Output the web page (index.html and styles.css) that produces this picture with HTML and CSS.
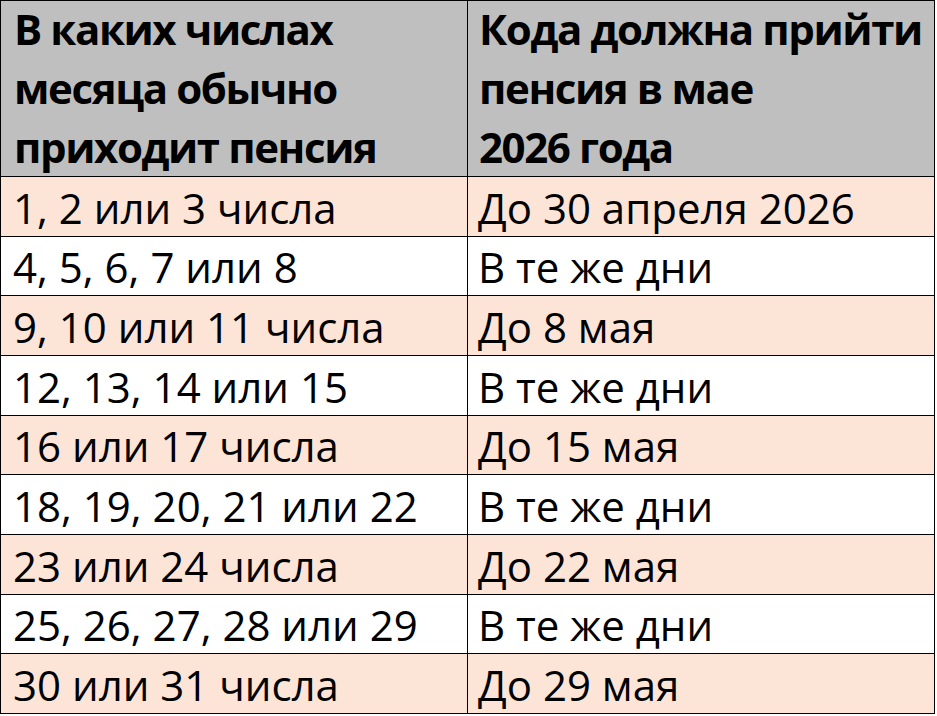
FILE: index.html
```html
<!DOCTYPE html>
<html lang="ru">
<head>
<meta charset="utf-8">
<title>Пенсия в мае 2026</title>
<link rel="stylesheet" href="styles.css">
</head>
<body>
<div class="table">
  <div class="cell head">В каких числах<br>месяца обычно<br>приходит пенсия</div>
  <div class="cell head col2">Кода должна прийти<br>пенсия в мае<br>2026 года</div>

  <div class="cell peach">1, 2 или 3 числа</div>
  <div class="cell peach col2">До 30 апреля 2026</div>

  <div class="cell">4, 5, 6, 7 или 8</div>
  <div class="cell col2">В те же дни</div>

  <div class="cell peach">9, 10 или 11 числа</div>
  <div class="cell peach col2">До 8 мая</div>

  <div class="cell">12, 13, 14 или 15</div>
  <div class="cell col2">В те же дни</div>

  <div class="cell peach">16 или 17 числа</div>
  <div class="cell peach col2">До 15 мая</div>

  <div class="cell">18, 19, 20, 21 или 22</div>
  <div class="cell col2">В те же дни</div>

  <div class="cell peach">23 или 24 числа</div>
  <div class="cell peach col2">До 22 мая</div>

  <div class="cell">25, 26, 27, 28 или 29</div>
  <div class="cell col2">В те же дни</div>

  <div class="cell peach">30 или 31 числа</div>
  <div class="cell peach col2">До 29 мая</div>
</div>
</body>
</html>
```
FILE: styles.css
```css
html, body {
  margin: 0;
  padding: 0;
  background: #ffffff;
}

.table {
  display: grid;
  grid-template-columns: 467px 467px;
  grid-template-rows: 176px repeat(9, 59.667px);
  width: 935px;
  border-top: 1px solid #000;
  border-left: 1px solid #000;
  box-sizing: border-box;
  font-family: "Open Sans", "Noto Sans", sans-serif;
  font-size: 42px;
  color: #000;
}

.cell {
  box-sizing: border-box;
  border-right: 1px solid #000;
  border-bottom: 1px solid #000;
  background: #ffffff;
  display: flex;
  align-items: flex-end;
  padding-left: 12px;
  line-height: 56px;
  white-space: nowrap;
  overflow: hidden;
}

.col2 {
  padding-left: 10px;
}

.peach {
  background: #fce4d6;
}

.head {
  background: #bfbfbf;
  font-weight: 700;
  letter-spacing: -1.4px;
  line-height: 59px;
  padding-left: 13px;
}

.head.col2 {
  padding-left: 11px;
}
```
